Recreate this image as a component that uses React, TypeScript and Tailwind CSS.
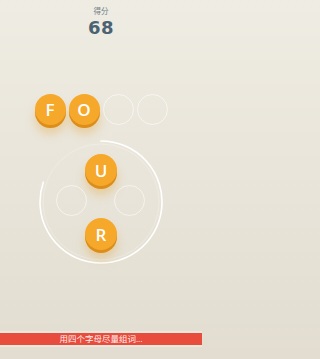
// Word game screen: score, answer slots, and the letter wheel.

const sans = { fontFamily: '"Open Sans", "Noto Sans CJK SC", sans-serif' };

function Coin({ letter, size }: { letter: string; size: number }) {
  return (
    <div
      className="flex items-center justify-center rounded-full bg-[#f6a82a] text-white font-semibold text-[17px] leading-none shadow-[0_3px_0_#dc8d1a,0_9px_10px_rgba(225,160,50,0.35)]"
      style={{ width: size, height: size }}
    >
      {letter}
    </div>
  );
}

function Slot({ size }: { size: number }) {
  return <div className="rounded-full border border-white/55" style={{ width: size, height: size }} />;
}

export default function App() {
  return (
    <div className="h-[359px] w-full bg-gradient-to-b from-[#efece3] to-[#e2ddd0]">
      <div className="flex h-[359px] w-[202px] flex-col items-center overflow-hidden" style={sans}>
        <div className="mt-[7px] text-[7.5px] leading-[9px] text-[#6f7e87]">得分</div>
        <div className="mt-[4px] font-['DejaVu_Sans',sans-serif] text-[18px] font-extrabold leading-[16px] tracking-[0.5px] text-[#4a6272]">
          68
        </div>

        <div className="mt-[58px] flex gap-[3px]">
          <Coin letter="F" size={31} />
          <Coin letter="O" size={31} />
          <Slot size={31} />
          <Slot size={31} />
        </div>

        <div className="relative mt-[15px] h-[124px] w-[124px]">
          <svg className="absolute inset-0" width="124" height="124" viewBox="0 0 124 124" fill="none">
            <circle cx="62" cy="62" r="58" stroke="white" strokeOpacity="0.25" strokeWidth="1" />
            <path d="M62 1 A61 61 0 1 1 4.32 42.14" stroke="white" strokeWidth="1.6" strokeLinecap="round" />
          </svg>
          <div className="absolute left-[46px] top-[14px]">
            <Coin letter="U" size={32} />
          </div>
          <div className="absolute left-[17px] top-[45px]">
            <Slot size={31} />
          </div>
          <div className="absolute left-[75px] top-[45px]">
            <Slot size={31} />
          </div>
          <div className="absolute left-[46px] top-[78px]">
            <Coin letter="R" size={32} />
          </div>
        </div>

        <div className="flex-1" />

        <div className="w-full border-y-2 border-[#ebe7dd] bg-[#e84c3d]">
          <div className="flex h-[12px] items-center justify-center text-[8.5px] leading-none text-white/95">
            用四个字母尽量组词...
          </div>
        </div>
        <div className="h-[12px]" />
      </div>
    </div>
  );
}
